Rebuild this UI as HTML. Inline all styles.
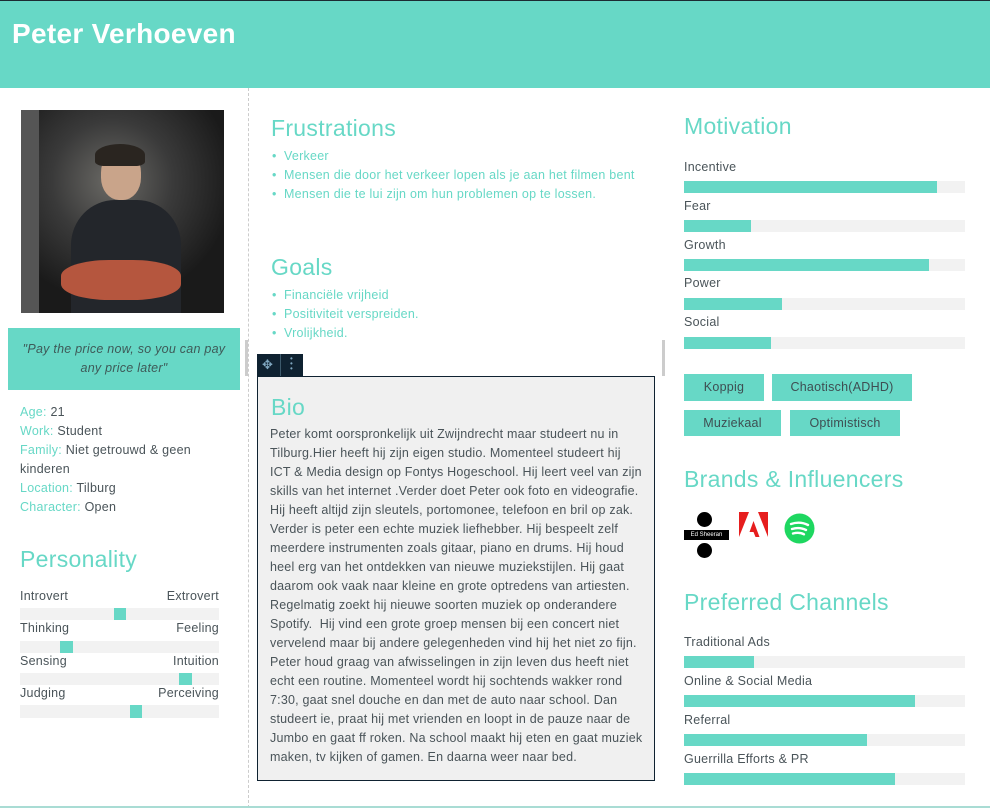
<!DOCTYPE html>
<html><head><meta charset="utf-8"><style>
*{margin:0;padding:0;box-sizing:border-box}
body{width:990px;height:810px;position:relative;background:#fff;font-family:"Liberation Sans",sans-serif;color:#4a5459;overflow:hidden;letter-spacing:0.25px}
.a{position:absolute}
h2{position:absolute;font-weight:normal;font-size:23px;color:#67d8c6;white-space:nowrap;letter-spacing:0.3px}
.bar{position:absolute;height:12px;background:#f2f2f2}
.bar i{position:absolute;top:0;left:0;height:12px;background:#67d8c6}
.lbl{position:absolute;font-size:12.5px;white-space:nowrap}
ul{position:absolute;list-style:none;font-size:12.5px;color:#67d8c6;line-height:19px}
ul li:before{content:"•";position:absolute;left:-12px}
.tag{position:absolute;background:#67d8c6;font-size:12.5px;text-align:center;color:#3e4e52}
.sl{position:absolute;left:20px;width:199px;height:12px;background:#f2f2f2}
.sl i{position:absolute;top:0;width:12px;height:12px;background:#67d8c6}
.info{position:absolute;left:20px;top:403px;font-size:12.5px;line-height:19px;width:210px}
.info b{font-weight:normal;color:#67d8c6}
</style></head><body>
<div class="a" style="left:0;top:0;width:990px;height:88px;background:#67d8c6;border-top:1px solid #1c2b33"></div>
<div class="a" style="left:12px;top:18px;font-size:28px;font-weight:bold;color:#fff;letter-spacing:0.3px">Peter Verhoeven</div>
<div class="a" style="left:248px;top:88px;height:720px;border-left:1px dashed #ccc"></div>
<div class="a" style="left:0;top:806px;width:990px;height:2px;background:#a9dcd4"></div>

<div class="a" style="left:21px;top:110px;width:203px;height:203px;background:radial-gradient(circle at 45% 35%,#6b6a66 0%,#3a3a3a 35%,#1a1a1a 70%);overflow:hidden">
 <div class="a" style="left:80px;top:40px;width:40px;height:50px;border-radius:45%;background:#c9a48a"></div>
 <div class="a" style="left:74px;top:34px;width:50px;height:22px;border-radius:50% 50% 20% 20%;background:#2a2520"></div>
 <div class="a" style="left:50px;top:90px;width:110px;height:113px;border-radius:40% 40% 0 0;background:#23262b"></div>
 <div class="a" style="left:40px;top:150px;width:120px;height:40px;border-radius:40%;background:#b5563e"></div>
 <div class="a" style="left:0;top:0;width:18px;height:203px;background:#555"></div>
</div>
<div class="a" style="left:8px;top:328px;width:232px;height:62px;background:#67d8c6;color:#3e5a58;font-style:italic;font-size:12.5px;text-align:center;line-height:19px;padding-top:12px">"Pay the price now, so you can pay<br>any price later"</div>
<div class="a" style="left:245px;top:340px;width:3px;height:36px;background:#ccc"></div>
<div class="info"><b>Age:</b> 21<br><b>Work:</b> Student<br><b>Family:</b> Niet getrouwd &amp; geen kinderen<br><b>Location:</b> Tilburg<br><b>Character:</b> Open</div>

<h2 style="left:20px;top:546px">Personality</h2>
<div class="lbl" style="left:20px;top:589px">Introvert</div><div class="lbl" style="left:140px;top:589px;width:79px;text-align:right">Extrovert</div>
<div class="sl" style="top:608px"><i style="left:94px"></i></div>
<div class="lbl" style="left:20px;top:621px">Thinking</div><div class="lbl" style="left:140px;top:621px;width:79px;text-align:right">Feeling</div>
<div class="sl" style="top:641px"><i style="left:40px;width:13px"></i></div>
<div class="lbl" style="left:20px;top:654px">Sensing</div><div class="lbl" style="left:140px;top:654px;width:79px;text-align:right">Intuition</div>
<div class="sl" style="top:673px"><i style="left:159px;width:13px"></i></div>
<div class="lbl" style="left:20px;top:686px">Judging</div><div class="lbl" style="left:140px;top:686px;width:79px;text-align:right">Perceiving</div>
<div class="sl" style="top:705px;height:13px"><i style="left:110px;height:13px"></i></div>

<h2 style="left:271px;top:115px">Frustrations</h2>
<ul style="left:284px;top:147px"><li>Verkeer</li><li>Mensen die door het verkeer lopen als je aan het filmen bent</li><li>Mensen die te lui zijn om hun problemen op te lossen.</li></ul>
<h2 style="left:271px;top:254px">Goals</h2>
<ul style="left:284px;top:286px"><li>Financiële vrijheid</li><li>Positiviteit verspreiden.</li><li>Vrolijkheid.</li></ul>
<div class="a" style="left:257px;top:354px;width:46px;height:22px;background:#0f2231"></div>
<div class="a" style="left:280px;top:354px;width:1px;height:22px;background:#3d5a6c"></div>
<div class="a" style="left:262px;top:357px;color:#7fa7c0;font-size:13px">✥</div>
<div class="a" style="left:290px;top:356px;color:#7fa7c0;font-size:8px;line-height:5px">•<br>•<br>•</div>
<div class="a" style="left:662px;top:340px;width:3px;height:36px;background:#ccc"></div>
<div class="a" style="left:257px;top:376px;width:398px;height:405px;background:#f0f0f0;border:1px solid #0f2231"></div>
<h2 style="left:271px;top:394px">Bio</h2>
<div class="a" style="left:270px;top:425px;width:380px;font-size:12.5px;line-height:19px;color:#4a5459;letter-spacing:0.2px;white-space:nowrap">Peter komt oorspronkelijk uit Zwijndrecht maar studeert nu in<br>Tilburg.Hier heeft hij zijn eigen studio. Momenteel studeert hij<br>ICT &amp; Media design op Fontys Hogeschool. Hij leert veel van zijn<br>skills van het internet .Verder doet Peter ook foto en videografie.<br>Hij heeft altijd zijn sleutels, portomonee, telefoon en bril op zak.<br>Verder is peter een echte muziek liefhebber. Hij bespeelt zelf<br>meerdere instrumenten zoals gitaar, piano en drums. Hij houd<br>heel erg van het ontdekken van nieuwe muziekstijlen. Hij gaat<br>daarom ook vaak naar kleine en grote optredens van artiesten.<br>Regelmatig zoekt hij nieuwe soorten muziek op onderandere<br>Spotify.&nbsp; Hij vind een grote groep mensen bij een concert niet<br>vervelend maar bij andere gelegenheden vind hij het niet zo fijn.<br>Peter houd graag van afwisselingen in zijn leven dus heeft niet<br>echt een routine. Momenteel wordt hij sochtends wakker rond<br>7:30, gaat snel douche en dan met de auto naar school. Dan<br>studeert ie, praat hij met vrienden en loopt in de pauze naar de<br>Jumbo en gaat ff roken. Na school maakt hij eten en gaat muziek<br>maken, tv kijken of gamen. En daarna weer naar bed.</div>

<h2 style="left:684px;top:113px">Motivation</h2>
<div class="lbl" style="left:684px;top:160px">Incentive</div><div class="bar" style="left:684px;top:181px;width:281px"><i style="width:253px"></i></div>
<div class="lbl" style="left:684px;top:199px">Fear</div><div class="bar" style="left:684px;top:220px;width:281px"><i style="width:67px"></i></div>
<div class="lbl" style="left:684px;top:238px">Growth</div><div class="bar" style="left:684px;top:259px;width:281px"><i style="width:245px"></i></div>
<div class="lbl" style="left:684px;top:276px">Power</div><div class="bar" style="left:684px;top:298px;width:281px"><i style="width:98px"></i></div>
<div class="lbl" style="left:684px;top:315px">Social</div><div class="bar" style="left:684px;top:337px;width:281px"><i style="width:87px"></i></div>

<div class="tag" style="left:684px;top:374px;width:80px;height:27px;line-height:27px">Koppig</div>
<div class="tag" style="left:772px;top:374px;width:140px;height:27px;line-height:27px">Chaotisch(ADHD)</div>
<div class="tag" style="left:684px;top:410px;width:97px;height:26px;line-height:26px">Muziekaal</div>
<div class="tag" style="left:790px;top:410px;width:110px;height:26px;line-height:26px">Optimistisch</div>

<h2 style="left:684px;top:466px">Brands &amp; Influencers</h2>
<div class="a" style="left:697px;top:512px;width:15px;height:15px;border-radius:50%;background:#000"></div>
<div class="a" style="left:684px;top:530px;width:45px;height:10px;background:#000;color:#fff;font-size:6px;line-height:10px;text-align:center;letter-spacing:0">Ed Sheeran</div>
<div class="a" style="left:697px;top:543px;width:15px;height:15px;border-radius:50%;background:#000"></div>
<svg class="a" style="left:739px;top:512px" width="29" height="25" viewBox="0 0 29 25"><path d="M0 0h10L0 25z M19 0h10v25z M14.5 9l6 16h-4l-2-5h-4z" fill="#e61e1e"/></svg>
<svg class="a" style="left:784px;top:513px" width="31" height="31" viewBox="0 0 31 31"><circle cx="15.5" cy="15.5" r="15" fill="#1ed760"/><path d="M7 11c6-2 12-1.5 17 1M8 16c5-1.5 10-1 14 1M9 20.5c4-1 8-.8 11 .8" stroke="#fff" stroke-width="2.4" fill="none" stroke-linecap="round"/></svg>

<h2 style="left:684px;top:589px">Preferred Channels</h2>
<div class="lbl" style="left:684px;top:635px">Traditional Ads</div><div class="bar" style="left:684px;top:656px;width:281px"><i style="width:70px"></i></div>
<div class="lbl" style="left:684px;top:674px">Online &amp; Social Media</div><div class="bar" style="left:684px;top:695px;width:281px"><i style="width:231px"></i></div>
<div class="lbl" style="left:684px;top:713px">Referral</div><div class="bar" style="left:684px;top:734px;width:281px"><i style="width:183px"></i></div>
<div class="lbl" style="left:684px;top:752px">Guerrilla Efforts &amp; PR</div><div class="bar" style="left:684px;top:773px;width:281px"><i style="width:211px"></i></div>
</body></html>
